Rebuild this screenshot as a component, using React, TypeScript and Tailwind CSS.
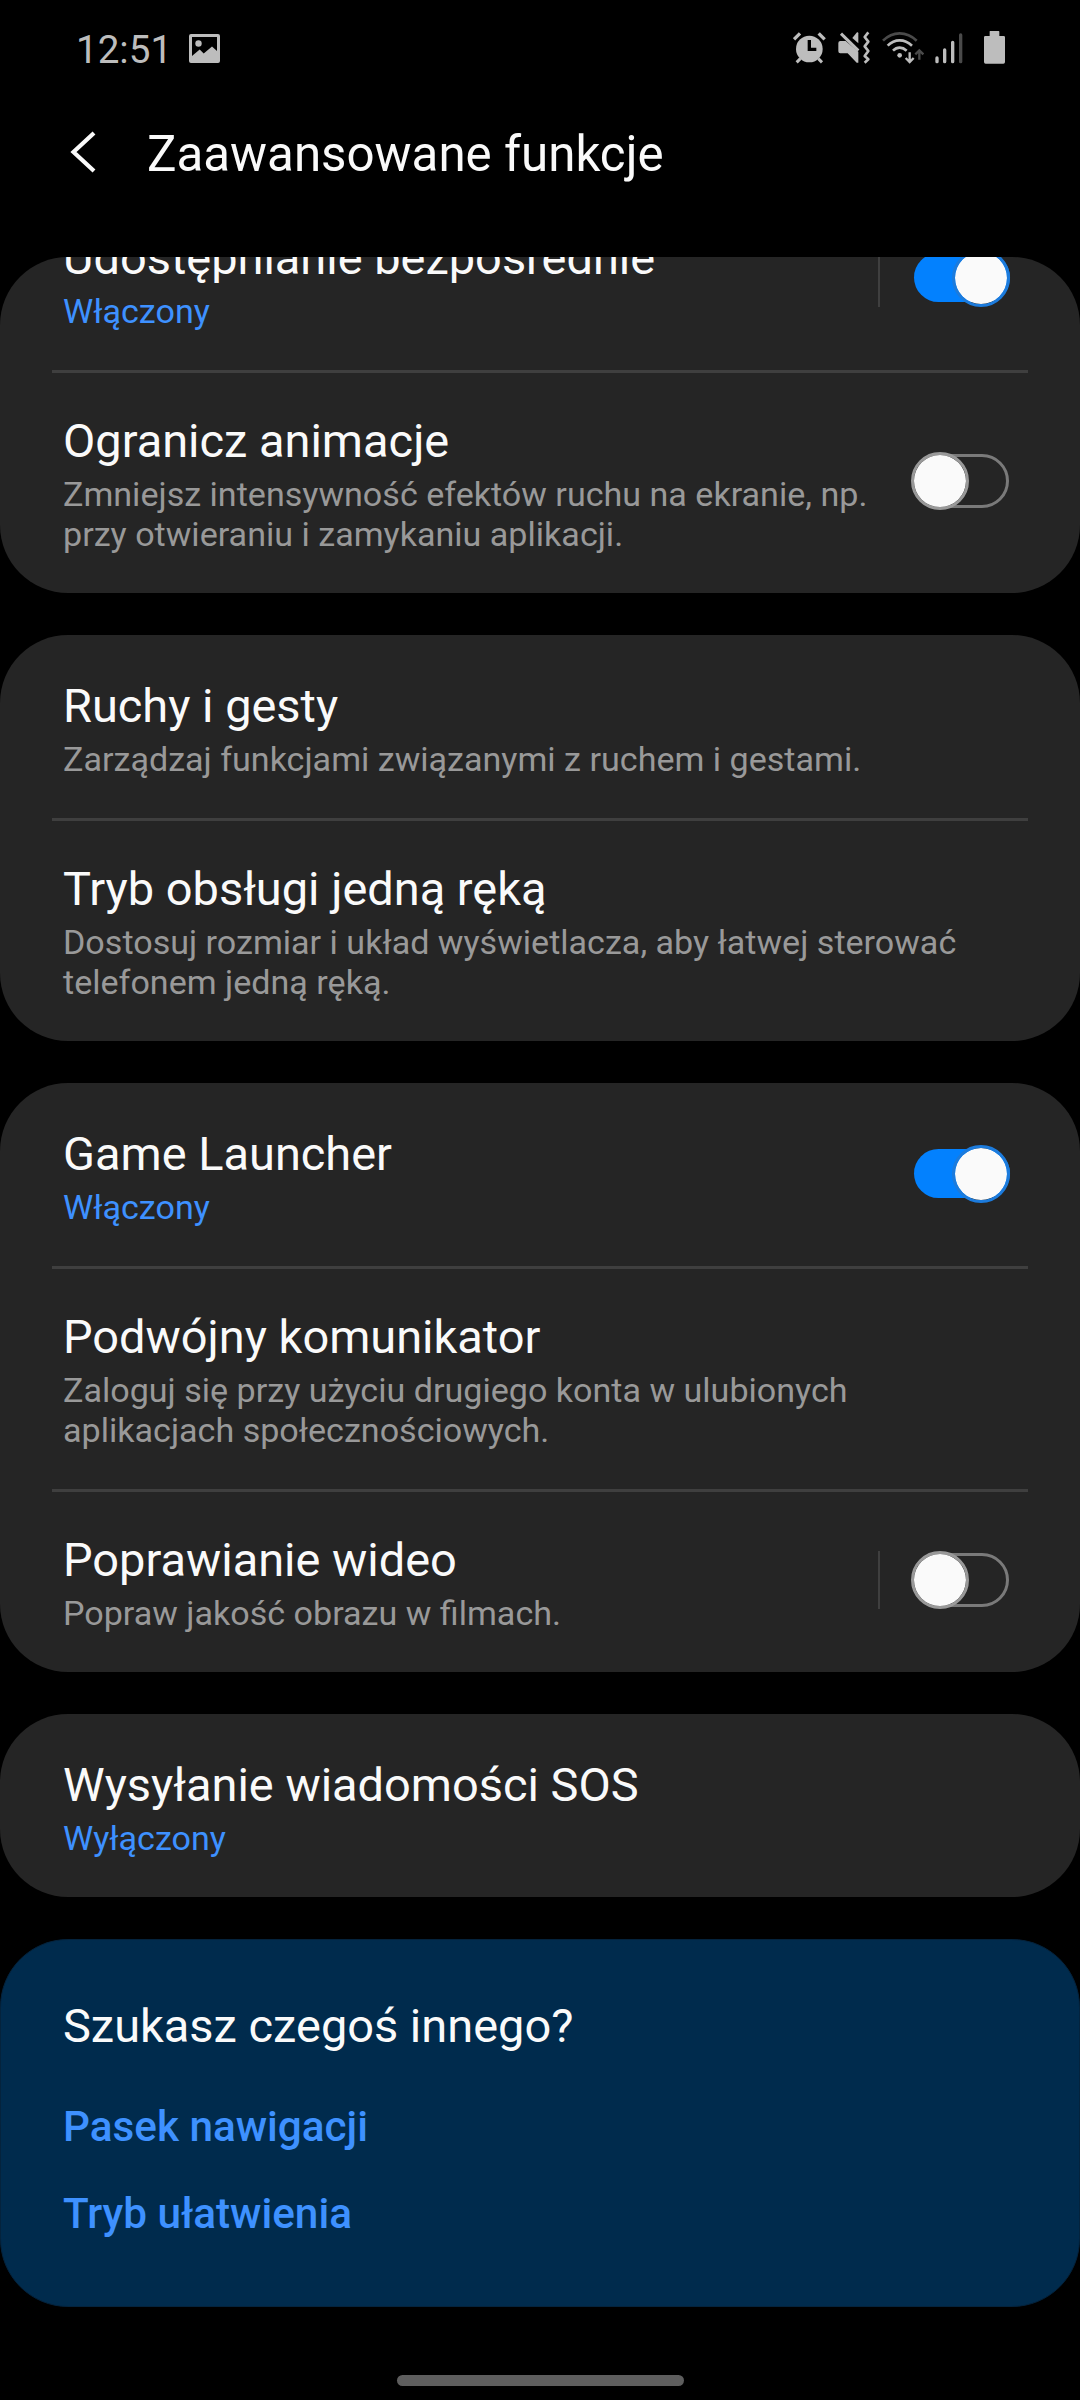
// Advanced features screen of the phone settings (dark theme).
import { clsx } from "clsx";

interface Item {
  title: string;
  description: string;
  status?: boolean; // description is the on/off state, drawn in blue
  toggle?: "on" | "off";
  separator?: boolean;
}

const GROUPS: Item[][] = [
  [
    { title: "Udostępnianie bezpośrednie", description: "Włączony", status: true, toggle: "on", separator: true },
    {
      title: "Ogranicz animacje",
      description: "Zmniejsz intensywność efektów ruchu na ekranie, np.\nprzy otwieraniu i zamykaniu aplikacji.",
      toggle: "off",
    },
  ],
  [
    { title: "Ruchy i gesty", description: "Zarządzaj funkcjami związanymi z ruchem i gestami." },
    {
      title: "Tryb obsługi jedną ręką",
      description: "Dostosuj rozmiar i układ wyświetlacza, aby łatwej sterować\ntelefonem jedną ręką.",
    },
  ],
  [
    { title: "Game Launcher", description: "Włączony", status: true, toggle: "on" },
    {
      title: "Podwójny komunikator",
      description: "Zaloguj się przy użyciu drugiego konta w ulubionych\naplikacjach społecznościowych.",
    },
    { title: "Poprawianie wideo", description: "Popraw jakość obrazu w filmach.", toggle: "off", separator: true },
  ],
  [{ title: "Wysyłanie wiadomości SOS", description: "Wyłączony", status: true }],
];

const LINKS = ["Pasek nawigacji", "Tryb ułatwienia"];

function StatusBar() {
  return (
    <header className="flex h-[98px] shrink-0 items-start pl-[76px] pr-[75px] text-[#bdbdbd]">
      <span className="mt-[27px] w-[95px] text-[38.6px] leading-[46px]">12:51</span>
      <svg className="ml-[18px] mt-[34px] h-[29px] w-[31px]" viewBox="0 0 31 29" fill="currentColor">
        <path
          fillRule="evenodd"
          d="M2 0h27a2 2 0 0 1 2 2v25a2 2 0 0 1-2 2H2a2 2 0 0 1-2-2V2a2 2 0 0 1 2-2Zm1 3v19l7.700-6.500 4 4L23 12.500l5 4.500V3Z"
        />
        <circle cx="9.500" cy="9.500" r="3.200" />
      </svg>

      <div className="ml-auto mt-[30px] flex h-[34px]">
        {/* Alarm */}
        <svg className="h-[34px] w-[34px]" viewBox="98 60 102 102" fill="none" stroke="currentColor">
          <circle cx="147" cy="117" r="40" fill="currentColor" stroke="none" />
          <path d="M101 88 119 70M175 70l18 18" strokeWidth="10" />
          <path d="M120 146l-11 11M174 146l11 11" strokeWidth="9" />
          <path d="M147 90v28h21" stroke="#000" strokeWidth="10" />
        </svg>

        {/* Muted, vibrating */}
        <svg className="ml-[11px] h-[34px] w-[33px]" viewBox="233 60 99 102" fill="currentColor">
          <path d="M240 93h16l38 32v33h-5l-27-28h-22a6 6 0 0 1-6-6V99a6 6 0 0 1 6-6Z" />
          <path d="M276 84 290 67q4-1 4 3v30Z" />
          <path d="M242 71l52 51" stroke="currentColor" strokeWidth="9" />
          <path
            d="M324 67l-11 14 11 14-11 14 11 14-11 15 11 10-11 10"
            fill="none"
            stroke="currentColor"
            strokeWidth="8"
            strokeLinejoin="round"
          />
        </svg>

        {/* Wi-Fi with traffic arrows */}
        <svg className="ml-[11px] h-[34px] w-[42px]" viewBox="365 60 126 102" fill="none" stroke="currentColor" strokeWidth="8">
          <path d="M368 92Q390 70 418 70T469 92" stroke="#4a4a4a" />
          <path d="M382 107Q398 91 418 91T455 107" />
          <path d="M398 122Q407 113 418 113T439 122" />
          <circle cx="418" cy="136" r="7" fill="currentColor" stroke="none" />
          <path d="M448 127v27M436 144l12 12 12-12" strokeWidth="7" />
          <path d="M477 149v-27M465 133l12-12 12 12" stroke="#4a4a4a" strokeWidth="7" />
        </svg>

        {/* Signal */}
        <svg className="ml-[11px] h-[34px] w-[28px]" viewBox="524 60 84 102" fill="none" stroke="currentColor" strokeWidth="10" strokeLinecap="round">
          <path d="M530 144v11M553 120v35M577 97v58" />
          <path d="M601 75v80" stroke="#4a4a4a" />
        </svg>

        {/* Battery */}
        <svg className="ml-[21px] h-[34px] w-[21px]" viewBox="672 60 63 102" fill="currentColor">
          <path d="M692 63h24a2 2 0 0 1 2 2v13h13a4 4 0 0 1 4 4v74a5 5 0 0 1-5 5h-53a5 5 0 0 1-5-5V82a4 4 0 0 1 4-4h13V65a2 2 0 0 1 3-2Z" />
        </svg>
      </div>
    </header>
  );
}

function Toggle({ on }: { on: boolean }) {
  return (
    <div className={clsx("relative flex h-[58px] w-[99px] shrink-0 items-center", on ? "justify-end" : "justify-start")}>
      <span
        className={clsx(
          "absolute left-[3px] rounded-full",
          on ? "right-0 h-[49px] bg-[#0381fe]" : "right-px h-[54px] border-[3px] border-[#7a7a7a]",
        )}
      />
      <span
        className={clsx(
          "relative size-[58px] rounded-full border-[3px] bg-[#fafafa] bg-clip-padding",
          on ? "border-[#1c7bdc]" : "border-[#999999]",
        )}
      />
    </div>
  );
}

function Row({ item }: { item: Item }) {
  return (
    <div className="flex items-center pl-[63px] pr-[70px]">
      <div className="min-w-0 flex-1 pb-[39px] pt-[43px]">
        <p className="whitespace-nowrap text-[46.95px] leading-[56px] text-[#fafafa]">{item.title}</p>
        <p
          className={clsx(
            "mt-[5px] whitespace-pre text-[34.1px] leading-[40px]",
            item.status ? "text-[#3e91ff]" : "text-[#999999]",
          )}
        >
          {item.description}
        </p>
      </div>
      {item.toggle && (
        <div className="mb-[2px] flex items-center gap-[31px]">
          {item.separator && <span className="h-[58px] w-[2px] bg-[#3f3f3f]" />}
          <Toggle on={item.toggle === "on"} />
        </div>
      )}
    </div>
  );
}

function Group({ items, scrolled }: { items: Item[]; scrolled?: boolean }) {
  return (
    <section className={clsx("flex shrink-0 flex-col overflow-hidden rounded-[68px] bg-[#252525]", scrolled && "h-[336px] justify-end")}>
      {items.map((item, i) => (
        <div key={item.title} className="relative shrink-0">
          {i > 0 && <span className="absolute inset-x-[52px] top-0 h-[3px] bg-[#3f3f3f]" />}
          <Row item={item} />
        </div>
      ))}
    </section>
  );
}

export default function App() {
  return (
    <div className="flex h-[2400px] w-[1080px] flex-col overflow-hidden bg-black font-['Roboto',sans-serif]">
      <StatusBar />

      <div className="flex h-[159px] shrink-0 items-start pl-[69px]">
        <svg className="mt-[32px] h-[44px] w-[28px]" viewBox="0 0 28 44" fill="none" stroke="#fafafa" strokeWidth="4.200">
          <path d="M25 3 4.500 22 25 41" />
        </svg>
        <h1 className="ml-[50px] mt-[27px] text-[49.25px] leading-[58px] text-[#fafafa]">Zaawansowane funkcje</h1>
      </div>

      <main className="flex flex-col gap-[42px]">
        {GROUPS.map((items, i) => (
          <Group key={i} items={items} scrolled={i === 0} />
        ))}

        <section className="h-[368px] shrink-0 rounded-[68px] border border-[#04233d] bg-[#002b4d] pl-[62px] pt-[58px]">
          <h2 className="text-[46.95px] leading-[56px] text-[#fafafa]">Szukasz czegoś innego?</h2>
          <div className="mt-[48px] flex flex-col gap-[37px]">
            {LINKS.map((link) => (
              <a key={link} className="text-[42.25px] font-medium leading-[50px] text-[#3e91ff]">
                {link}
              </a>
            ))}
          </div>
        </section>
      </main>

      {/* Gesture bar */}
      <div className="mx-auto mb-[14px] mt-auto h-[11px] w-[287px] shrink-0 rounded-full bg-[#5e5e5e]" />
    </div>
  );
}
